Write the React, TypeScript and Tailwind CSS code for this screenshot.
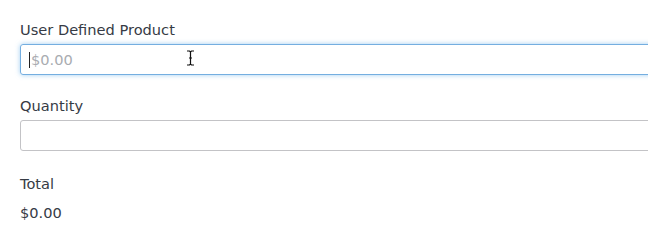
import React from "react";

export default function App() {
  return (
    <div className="relative w-[648px] h-[250px] overflow-hidden bg-white pl-5 pt-[20px] text-[14.6px] text-[#363b45]" style={{ fontFamily: '"DejaVu Sans", "Open Sans", sans-serif' }}>
      <div className="flex flex-col">
        <label className="leading-5 mb-[4px]">User Defined Product</label>
        <div className="w-[660px] h-[31px] rounded-[3px] border border-[#74aee0] shadow-[0_0_5px_rgba(102,175,233,0.6)] flex items-center px-[8px]">
          <span className="w-px h-[16px] bg-[#222] mr-[1px]" />
          <span className="text-[#a9acb1] text-[14.6px]">$0.00</span>
        </div>
        <label className="leading-5 mt-[21px] mb-[4px]">Quantity</label>
        <div className="w-[660px] h-[31px] rounded-[3px] border border-[#c3c3c6]" />
        <label className="leading-5 mt-[23px]">Total</label>
        <div className="leading-5 mt-[9px]">$0.00</div>
      </div>
      <svg className="absolute left-[186px] top-[50px]" width="9" height="16" viewBox="0 0 9 16">
        <path d="M1 1h2.5l1 1 1-1H8M4.5 2v12M1 15h2.5l1-1 1 1H8M3 8h3" stroke="#111" strokeWidth="1.2" fill="none" />
      </svg>
    </div>
  );
}
